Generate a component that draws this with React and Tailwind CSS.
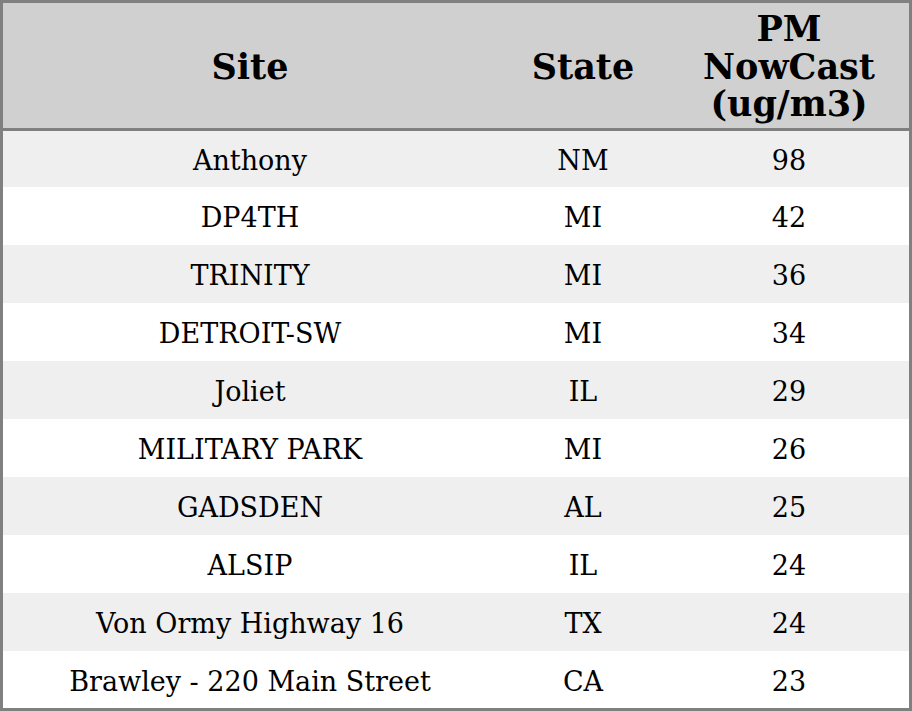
const rows = [
  { site: "Anthony", state: "NM", pm: 98 },
  { site: "DP4TH", state: "MI", pm: 42 },
  { site: "TRINITY", state: "MI", pm: 36 },
  { site: "DETROIT-SW", state: "MI", pm: 34 },
  { site: "Joliet", state: "IL", pm: 29 },
  { site: "MILITARY PARK", state: "MI", pm: 26 },
  { site: "GADSDEN", state: "AL", pm: 25 },
  { site: "ALSIP", state: "IL", pm: 24 },
  { site: "Von Ormy Highway 16", state: "TX", pm: 24 },
  { site: "Brawley - 220 Main Street", state: "CA", pm: 23 },
];

const rowHeight = (i) =>
  i === 0 ? "h-[56px]" : i === rows.length - 1 ? "h-[57px]" : "h-[58px]";

export default function App() {
  return (
    <div className="w-[912px] bg-white font-['DejaVu_Serif',serif] text-black">
      <div className="border-[3px] border-[#808080]">
        <div className="grid h-[128px] grid-cols-[494px_172px_240px] items-center border-b-[3px] border-[#808080] bg-[#d0d0d0] text-[35px] leading-[37.5px] font-bold">
          <div className="pt-[2px] text-center">Site</div>
          <div className="pt-[2px] text-center">State</div>
          <div className="pt-[2px] text-center">
            PM
            <br />
            NowCast
            <br />
            (ug/m3)
          </div>
        </div>
        {rows.map((r, i) => (
          <div
            key={r.site}
            className={`grid grid-cols-[494px_172px_240px] items-center pt-[3px] text-[27px] leading-none ${rowHeight(i)} ${
              i % 2 === 0 ? "bg-[#efefef]" : "bg-white"
            }`}
          >
            <div className="text-center">{r.site}</div>
            <div className="text-center">{r.state}</div>
            <div className="text-center">{r.pm}</div>
          </div>
        ))}
      </div>
    </div>
  );
}
